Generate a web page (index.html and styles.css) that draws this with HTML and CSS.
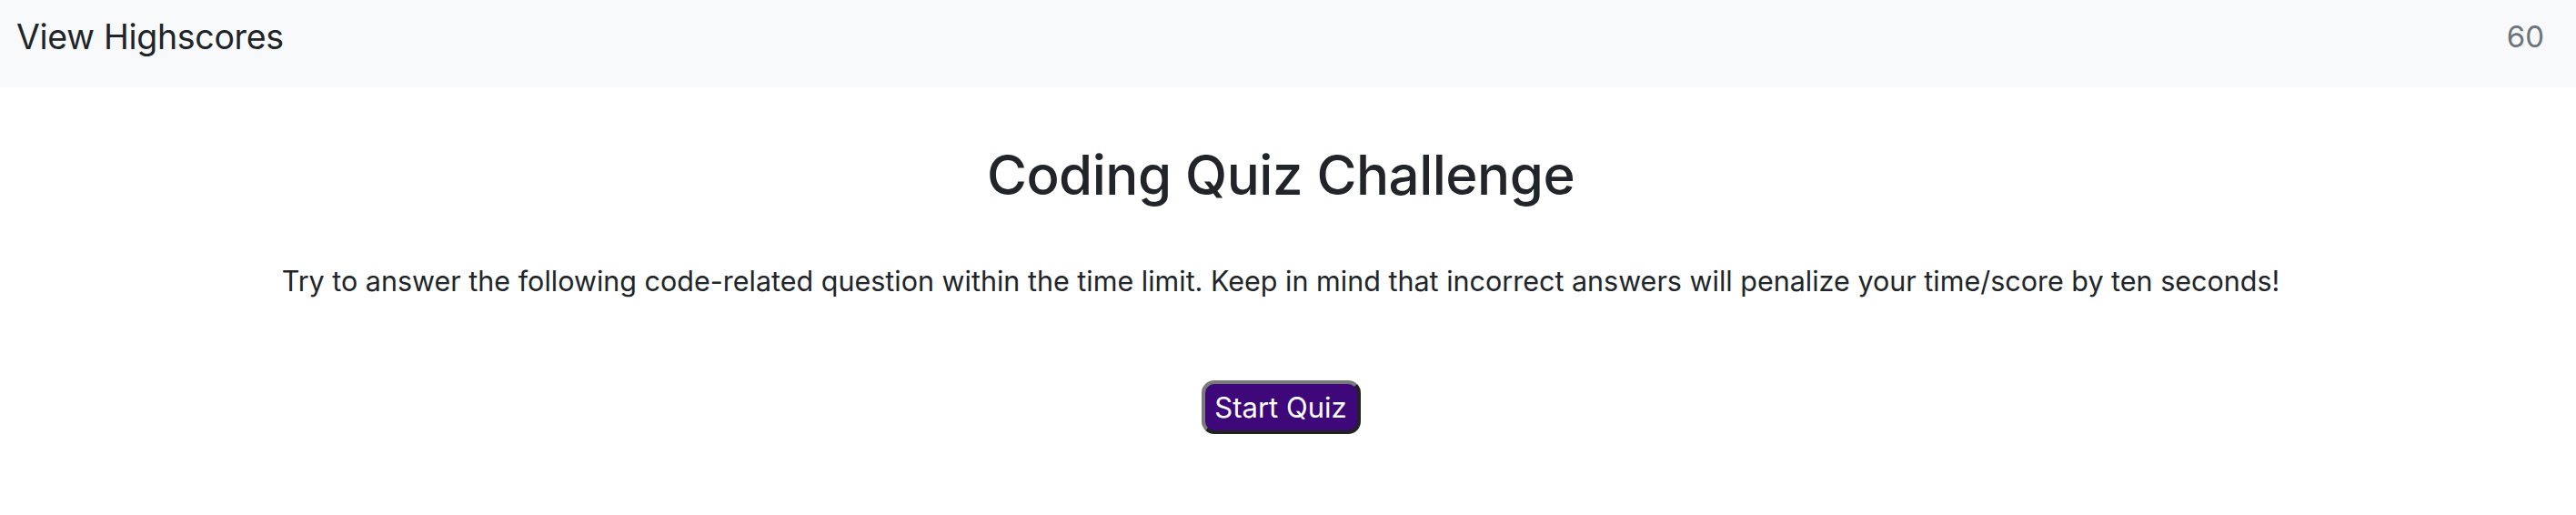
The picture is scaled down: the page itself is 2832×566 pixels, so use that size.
FILE: index.html
```html
<!DOCTYPE html>
<html lang="en">
<head>
<meta charset="utf-8">
<title>Coding Quiz</title>
<link rel="stylesheet" href="styles.css">
</head>
<body>
<header class="topbar">
  <a class="highscores" href="#">View Highscores</a>
  <span class="timer">60</span>
</header>
<main class="intro">
  <h1 class="title">Coding Quiz Challenge</h1>
  <p class="lead">Try to answer the following code-related question within the time limit. Keep in mind that incorrect answers will penalize your time/score by ten seconds!</p>
  <button class="start" type="button">Start Quiz</button>
</main>
</body>
</html>
```
FILE: styles.css
```css
html, body {
  margin: 0;
  padding: 0;
  background: #ffffff;
  color: #212529;
  font-family: Inter, "Noto Sans", "Liberation Sans", sans-serif;
}

.topbar {
  display: flex;
  justify-content: space-between;
  align-items: center;
  height: 96px;
  box-sizing: border-box;
  padding: 0 35px 16px 18px;
  background: #f8f9fa;
}

.highscores {
  font-size: 37.5px;
  color: #212529;
  text-decoration: none;
  letter-spacing: -0.3px;
}

.timer {
  font-size: 33px;
  color: #6c757d;
}

.intro {
  display: flex;
  flex-direction: column;
  align-items: center;
  padding: 0 16px 0 0;
}

.title {
  margin: 60px 0 0;
  font-size: 60px;
  font-weight: 500;
  line-height: 1.2;
  letter-spacing: -0.5px;
}

.lead {
  margin: 58px 0 0;
  font-size: 30.5px;
  line-height: 1.5;
}

.start {
  margin-top: 86px;
  width: 175px;
  height: 59px;
  border-color: #7a7a7a #222222 #222222 #7a7a7a;
  border-width: 4px;
  border-style: solid;
  border-radius: 14px;
  background: #3f087a;
  color: #ffffff;
  font-family: Inter, "Noto Sans", "Liberation Sans", sans-serif;
  font-size: 31px;
  padding: 0;
}
```
